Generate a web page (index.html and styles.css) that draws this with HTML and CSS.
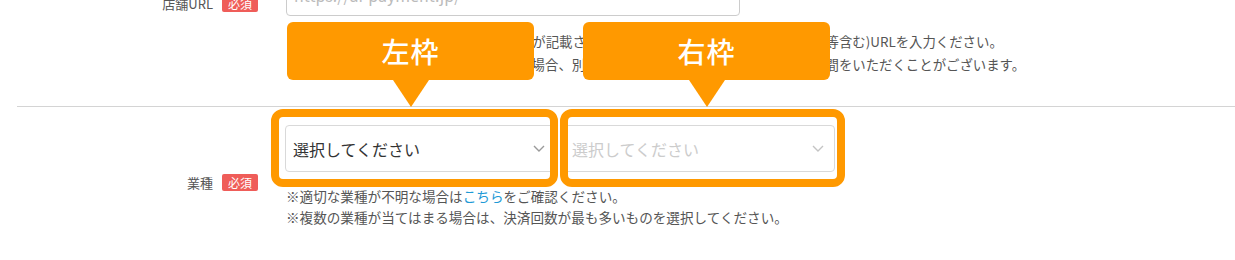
FILE: index.html
```html
<!DOCTYPE html>
<html lang="ja">
<head>
<meta charset="utf-8">
<title>業種選択</title>
<link rel="stylesheet" href="styles.css">
</head>
<body>
<div class="page">
  <section class="row row-url">
    <div class="label-col">
      <span class="label">店舗URL</span><span class="badge">必須</span>
    </div>
    <div class="field-col">
      <div class="input">https://ai-payment.jp/</div>
      <p class="hint hint-first">※加盟店様の店舗名、商品/サービス内容が記載されているホームページの（トップページ等含む)URLを入力ください。</p>
      <p class="hint">※ホームページが未完成/または準備中の場合、別途資料のご提出をお願いするなど、お時間をいただくことがございます。</p>
    </div>
  </section>

  <hr class="divider">

  <section class="row row-type">
    <div class="label-col">
      <span class="label">業種</span><span class="badge">必須</span>
    </div>
    <div class="field-col">
      <div class="selects">
        <div class="select select-main">
          <span class="select-text">選択してください</span>
          <svg class="chevron" width="12" height="7" viewBox="0 0 12 7"><path d="M1 1 L6 6 L11 1" fill="none" stroke="currentColor" stroke-width="1.4"/></svg>
        </div>
        <div class="select select-sub">
          <span class="select-text">選択してください</span>
          <svg class="chevron" width="12" height="7" viewBox="0 0 12 7"><path d="M1 1 L6 6 L11 1" fill="none" stroke="currentColor" stroke-width="1.4"/></svg>
        </div>
      </div>
      <p class="hint hint-first">※適切な業種が不明な場合は<a class="link" href="#">こちら</a>をご確認ください。</p>
      <p class="hint">※複数の業種が当てはまる場合は、決済回数が最も多いものを選択してください。</p>
    </div>
  </section>

  <div class="frame frame-left"></div>
  <div class="frame frame-right"></div>
  <div class="callout callout-left">左枠</div>
  <div class="callout callout-right">右枠</div>
</div>
</body>
</html>
```

FILE: styles.css
```css
html, body {
  margin: 0;
  padding: 0;
  background: #ffffff;
}

.page {
  position: relative;
  width: 1235px;
  height: 260px;
  overflow: hidden;
  font-family: "Noto Sans CJK JP", "Noto Sans", sans-serif;
  color: #555555;
}

.row {
  display: flex;
  align-items: flex-start;
}

.label-col {
  width: 258px;
  display: flex;
  justify-content: flex-end;
  align-items: center;
  gap: 9px;
  flex-shrink: 0;
}

.label {
  font-size: 13px;
  line-height: 17px;
  color: #555555;
}

.badge {
  display: inline-block;
  width: 36px;
  height: 17px;
  line-height: 17px;
  text-align: center;
  font-size: 12px;
  color: #ffffff;
  background: #ef5d59;
  border-radius: 2px;
}

.field-col {
  margin-left: 28px;
}

/* URL row */
.row-url {
  margin-top: -26px;
}

.row-url .label-col {
  margin-top: 21px;
}

.input {
  box-sizing: border-box;
  width: 454px;
  height: 42px;
  border: 1px solid #cccccc;
  border-radius: 4px;
  padding: 0 7px;
  font-size: 16px;
  line-height: 40px;
  color: #bbbbbb;
}

.hint {
  margin: 0;
  font-size: 13.4px;
  line-height: 21.5px;
  color: #555555;
  white-space: nowrap;
}

.row-url .hint {
  line-height: 22.5px;
}

.row-url .hint-first {
  margin-top: 14px;
}

.link {
  color: #1e9ad6;
  text-decoration: none;
}

.divider {
  margin: 31px 0 0 17px;
  border: 0;
  border-top: 1px solid #d4d4d4;
  height: 0;
}

/* Business type row */
.row-type {
  padding-top: 18px;
}

.row-type .label-col {
  margin-top: 49px;
}

.row-type .field-col {
  margin-left: 27px;
}

.selects {
  display: flex;
  gap: 8px;
}

.select {
  box-sizing: border-box;
  width: 271px;
  height: 47px;
  border: 1px solid #d9d9d9;
  border-radius: 4px;
  background: #ffffff;
  display: flex;
  align-items: center;
  justify-content: space-between;
  padding: 0 10px 0 7px;
  font-size: 16px;
}

.select-main {
  color: #333333;
}

.select-main .chevron {
  color: #9a9a9a;
}

.select-sub {
  color: #cccccc;
}

.select-sub .chevron {
  color: #c4c4c4;
}

.row-type .hint {
  margin-left: 1px;
  font-size: 13.6px;
  line-height: 21px;
}

.row-type .hint-first {
  margin-top: 14px;
}

/* Annotation overlays */
.frame {
  position: absolute;
  top: 109px;
  height: 78px;
  box-sizing: border-box;
  border: 8px solid #ff9900;
  border-radius: 12px;
}

.frame-left {
  left: 271px;
  width: 287px;
}

.frame-right {
  left: 560px;
  width: 285px;
}

.callout {
  position: absolute;
  top: 22px;
  width: 247px;
  height: 58px;
  background: #ff9900;
  border-radius: 6px;
  color: #ffffff;
  font-size: 28px;
  font-weight: 500;
  line-height: 58px;
  text-align: center;
  letter-spacing: 1px;
}

.callout::after {
  content: "";
  position: absolute;
  left: 50%;
  top: 58px;
  margin-left: -18px;
  border-left: 18px solid transparent;
  border-right: 18px solid transparent;
  border-top: 27px solid #ff9900;
}

.callout-left {
  left: 287px;
}

.callout-right {
  left: 583px;
}
```
